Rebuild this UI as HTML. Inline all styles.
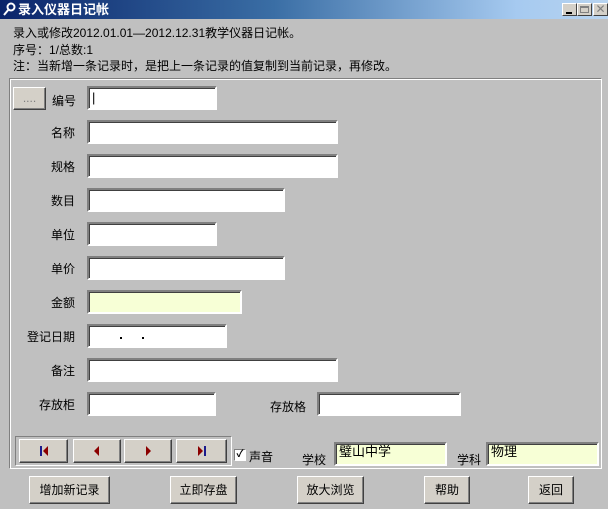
<!DOCTYPE html>
<html><head><meta charset="utf-8"><style>
*{margin:0;padding:0;box-sizing:border-box}
body{width:608px;height:509px;background:#c0c0c0;font-family:"Liberation Sans","Noto Sans CJK SC","WenQuanYi Zen Hei",sans-serif;font-size:12px;color:#000;position:relative;overflow:hidden}
.a{position:absolute}
.t{position:absolute;left:0;top:0;width:608px;height:19px;background:linear-gradient(90deg,#0a246a 0%,#3a6ea5 45%,#a6caf0 85%,#b8d4f0 100%);color:#fff;font-weight:bold;font-size:13px;line-height:19px;padding-left:18px}
.wb{position:absolute;top:3px;width:15px;height:13px;background:#d4d0c8;border:1px solid;border-color:#fff #404040 #404040 #fff}
.in{position:absolute;background:#fff;border:2px solid;border-color:#808080 #fff #fff #808080;box-shadow:inset 1px 1px 0 #404040;height:24px;font-size:13px;padding:2px 3px;line-height:16px}
.y{background:#f7ffd6}
.l{position:absolute;font-size:12px;text-align:right;width:60px;line-height:14px}
.b{position:absolute;background:#d4d0c8;border:1px solid;border-color:#fff #404040 #404040 #fff;box-shadow:inset -1px -1px 0 #808080;text-align:center;font-size:12px}
.panel{position:absolute;left:9px;top:78px;width:593px;height:391px;border:1px solid;border-color:#808080 #fff #fff #808080;box-shadow:inset 1px 1px 0 #fff,1px 1px 0 #808080 inset}
</style></head><body>
<div class="t">录入仪器日记帐</div>
<svg class="a" style="left:2px;top:2px" width="15" height="15" viewBox="0 0 15 15"><circle cx="9" cy="5" r="3.5" fill="none" stroke="#fff" stroke-width="2"/><path d="M7 7 L2 13" stroke="#fff" stroke-width="2"/></svg>
<div class="wb" style="left:562px"><div class="a" style="left:3px;top:8px;width:6px;height:2px;background:#000"></div></div>
<div class="wb" style="left:577px"><div class="a" style="left:2px;top:2px;width:9px;height:7px;border:1px solid #808080;border-top-width:2px"></div></div>
<div class="wb" style="left:593px;color:#808080;font-size:12px;line-height:11px;text-align:center">✕</div>
<div class="a" style="left:13px;top:25px;line-height:16.5px">录入或修改2012.01.01—2012.12.31教学仪器日记帐。<br>序号：1/总数:1<br>注：当新增一条记录时，是把上一条记录的值复制到当前记录，再修改。</div>
<div class="panel"></div>
<div class="b" style="left:13px;top:87px;width:33px;height:23px;line-height:20px;color:#808080">....</div>
<div class="a" style="left:52px;top:92px">编号</div>
<div class="in" style="left:87px;top:86px;width:130px">|</div>
<div class="l" style="left:15px;top:126px">名称</div><div class="in" style="left:87px;top:120px;width:251px"></div>
<div class="l" style="left:15px;top:160px">规格</div><div class="in" style="left:87px;top:154px;width:251px"></div>
<div class="l" style="left:15px;top:194px">数目</div><div class="in" style="left:87px;top:188px;width:198px"></div>
<div class="l" style="left:15px;top:228px">单位</div><div class="in" style="left:87px;top:222px;width:130px"></div>
<div class="l" style="left:15px;top:262px">单价</div><div class="in" style="left:87px;top:256px;width:198px"></div>
<div class="l" style="left:15px;top:296px">金额</div><div class="in y" style="left:87px;top:290px;width:155px"></div>
<div class="l" style="left:15px;top:330px">登记日期</div><div class="in" style="left:87px;top:324px;width:140px"><div class="a" style="left:31px;top:11px;width:2px;height:2px;background:#000"></div><div class="a" style="left:53px;top:11px;width:2px;height:2px;background:#000"></div></div>
<div class="l" style="left:15px;top:364px">备注</div><div class="in" style="left:87px;top:358px;width:251px"></div>
<div class="l" style="left:15px;top:398px">存放柜</div><div class="in" style="left:87px;top:392px;width:129px"></div>
<div class="a" style="left:270px;top:398px">存放格</div><div class="in" style="left:317px;top:392px;width:144px"></div>
<div class="a" style="left:15px;top:436px;width:217px;height:30px;border:1px solid;border-color:#808080 #fff #fff #808080"></div>
<div class="b" style="left:19px;top:439px;width:49px;height:24px"><svg width="12" height="10" style="margin-top:6px"><rect x="2" y="0" width="2" height="10" fill="#1a1a8c"/><path d="M10 0 L5 5 L10 10Z" fill="#8b0000"/></svg></div>
<div class="b" style="left:73px;top:439px;width:48px;height:24px"><svg width="10" height="10" style="margin-top:6px"><path d="M7 0 L2 5 L7 10Z" fill="#8b0000"/></svg></div>
<div class="b" style="left:124px;top:439px;width:48px;height:24px"><svg width="10" height="10" style="margin-top:6px"><path d="M3 0 L8 5 L3 10Z" fill="#8b0000"/></svg></div>
<div class="b" style="left:176px;top:439px;width:51px;height:24px"><svg width="12" height="10" style="margin-top:6px"><path d="M2 0 L7 5 L2 10Z" fill="#8b0000"/><rect x="8" y="0" width="2" height="10" fill="#1a1a8c"/></svg></div>
<div class="a" style="left:234px;top:449px;width:12px;height:12px;background:#fff;border:1px solid;border-color:#808080 #fff #fff #808080;font-size:10px;line-height:10px;text-align:center;font-weight:bold">✓</div>
<div class="a" style="left:249px;top:448px">声音</div>
<div class="a" style="left:302px;top:451px">学校</div>
<div class="in y" style="left:334px;top:442px;width:113px;padding-top:0">璧山中学</div>
<div class="a" style="left:457px;top:451px">学科</div>
<div class="in y" style="left:486px;top:442px;width:113px;padding-top:0">物理</div>
<div class="b" style="left:29px;top:476px;width:81px;height:28px;line-height:26px">增加新记录</div>
<div class="b" style="left:170px;top:476px;width:67px;height:28px;line-height:26px">立即存盘</div>
<div class="b" style="left:297px;top:476px;width:67px;height:28px;line-height:26px">放大浏览</div>
<div class="b" style="left:424px;top:476px;width:46px;height:28px;line-height:26px">帮助</div>
<div class="b" style="left:528px;top:476px;width:46px;height:28px;line-height:26px">返回</div>
</body></html>
